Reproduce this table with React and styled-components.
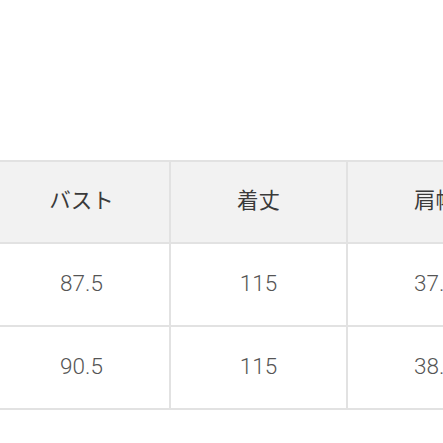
import React from "react";
import styled, { createGlobalStyle } from "styled-components";

const Global = createGlobalStyle`
  html, body { margin: 0; padding: 0; background: #fff; overflow: hidden; }
  body { width: 443px; height: 443px; }
`;

const Page = styled.div`
  width: 443px;
  height: 443px;
  overflow: hidden;
  padding-top: 160px;
  box-sizing: border-box;
`;

const Table = styled.div`
  display: flex;
  flex-direction: column;
  margin-left: -6px;
  width: max-content;
  border-top: 2px solid #e2e2e2;
`;

const Row = styled.div`
  display: flex;
  height: ${(p) => p.$h}px;
  background: ${(p) => (p.$head ? "#f2f2f2" : "#fff")};
  border-bottom: 2px solid #e2e2e2;
`;

const Cell = styled.div`
  width: 177px;
  flex: none;
  display: flex;
  align-items: center;
  justify-content: center;
  border-right: 2px solid #e2e2e2;
  font-family: ${(p) =>
    p.$head
      ? `"Noto Sans CJK JP", "Noto Sans", sans-serif`
      : `Roboto, "Noto Sans", sans-serif`};
  font-size: ${(p) => (p.$head ? 21.5 : 22.5)}px;
  font-weight: ${(p) => (p.$head ? 400 : 300)};
  color: ${(p) => (p.$head ? "#3a3a3a" : "#555")};
  padding-bottom: ${(p) => (p.$head ? 7 : 4)}px;
  box-sizing: border-box;
`;

const headers = ["バスト", "着丈", "肩幅"];
const rows = [
  ["87.5", "115", "37.5"],
  ["90.5", "115", "38.5"],
];

export default function App() {
  return (
    <>
      <Global />
      <Page>
        <Table>
          <Row $head $h={80}>
            {headers.map((h) => (
              <Cell $head key={h}>{h}</Cell>
            ))}
          </Row>
          {rows.map((r, i) => (
            <Row key={i} $h={81}>
              {r.map((v, j) => (
                <Cell key={j}>{v}</Cell>
              ))}
            </Row>
          ))}
        </Table>
      </Page>
    </>
  );
}
